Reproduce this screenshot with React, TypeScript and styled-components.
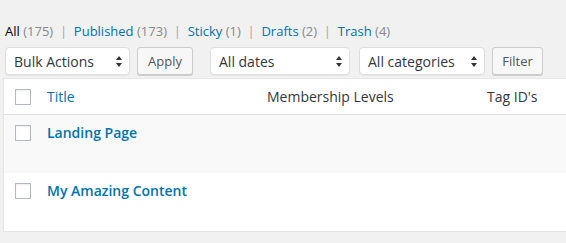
import React from "react";
import styled, { createGlobalStyle } from "styled-components";

const Global = createGlobalStyle`
  html, body { margin: 0; padding: 0; background: #f1f1f1; overflow: hidden; }
  body { font-family: "Open Sans", "Liberation Sans", sans-serif; color: #444; font-size: 13px; }
`;

const Page = styled.div`
  padding: 18px 0 0 3px;
  width: 640px;
`;

const Views = styled.ul`
  list-style: none;
  margin: 0 0 3px 2px;
  padding: 0;
  display: flex;
  height: 26px;
  line-height: 26px;
  font-size: 13px;
  color: #666;
  white-space: pre;
`;

const ViewItem = styled.li``;

const ViewLink = styled.a<{ $current?: boolean }>`
  color: ${(p) => (p.$current ? "#000" : "#0073aa")};
  text-decoration: none;
`;

const Count = styled.span`
  color: #888;
`;

const Sep = styled.span`
  color: #a0a5aa;
`;

const Nav = styled.div`
  display: flex;
  align-items: center;
  margin-left: 2px;
  height: 28px;
  margin-bottom: 3px;
`;

const Group = styled.div`
  display: flex;
  gap: 7px;
  margin-right: 17px;
  &:last-child { margin-right: 0; }
`;

const Select = styled.div<{ $w: number; $pad?: number; $ml?: number }>`
  position: relative;
  box-sizing: border-box;
  width: ${(p) => p.$w}px;
  height: 28px;
  margin-left: ${(p) => p.$ml ?? 0}px;
  background: #fff;
  border: 1px solid #ddd;
  border-radius: 4px;
  box-shadow: 0 1px 1px rgba(0, 0, 0, 0.04);
  display: flex;
  align-items: center;
  padding-left: ${(p) => p.$pad ?? 8}px;
  font-size: 14px;
  color: #32373c;
`;

const Arrows = styled.svg`
  position: absolute;
  right: 7px;
  top: 8px;
`;

const Button = styled.div<{ $w: number }>`
  box-sizing: border-box;
  width: ${(p) => p.$w}px;
  height: 28px;
  background: #f7f7f7;
  border: 1px solid #ccc;
  border-radius: 3px;
  box-shadow: 0 1px 0 #ccc;
  display: flex;
  align-items: center;
  justify-content: center;
  font-size: 13px;
  color: #555;
`;

const Table = styled.div`
  width: 620px;
  background: #fff;
  border: 1px solid #e5e5e5;
  box-shadow: 0 1px 1px rgba(0, 0, 0, 0.04);
`;

const Row = styled.div<{ $head?: boolean; $alt?: boolean }>`
  display: grid;
  grid-template-columns: 43px 220px 220px 1fr;
  height: ${(p) => (p.$head ? "35px" : "58px")};
  background: ${(p) => (p.$alt ? "#f9f9f9" : "#fff")};
  border-bottom: ${(p) => (p.$head ? "1px solid #e1e1e1" : "none")};
`;

const CheckCell = styled.div`
  padding: 10px 0 0 11px;
`;

const Check = styled.div`
  box-sizing: border-box;
  width: 16px;
  height: 16px;
  border: 1px solid #b4b9be;
  background: #fff;
  box-shadow: inset 0 1px 2px rgba(0, 0, 0, 0.07);
`;

const HeadCell = styled.div<{ $link?: boolean }>`
  font-size: 14px;
  line-height: 20px;
  padding-top: 8px;
  color: ${(p) => (p.$link ? "#0073aa" : "#32373c")};
`;

const TitleCell = styled.div`
  font-size: 14px;
  font-weight: 600;
  line-height: 20px;
  padding-top: 8px;
  color: #0073aa;
`;

const Cell = styled.div``;

const SelectArrows = () => (
  <Arrows width="6" height="11" viewBox="0 0 6 11">
    <path d="M3 0 L6 4 L0 4 Z" fill="#333" />
    <path d="M0 7 L6 7 L3 11 Z" fill="#333" />
  </Arrows>
);

const views = [
  { label: "All", count: 175, current: true },
  { label: "Published", count: 173 },
  { label: "Sticky", count: 1 },
  { label: "Drafts", count: 2 },
  { label: "Trash", count: 4 },
];

const rows = ["Landing Page", "My Amazing Content"];

export default function App() {
  return (
    <>
      <Global />
      <Page>
        <Views>
          {views.map((v, i) => (
            <ViewItem key={v.label}>
              <ViewLink $current={v.current}>
                {v.label} <Count>({v.count})</Count>
              </ViewLink>
              {i < views.length - 1 && <Sep>{"  |  "}</Sep>}
            </ViewItem>
          ))}
        </Views>
        <Nav>
          <Group>
            <Select $w={125}>
              Bulk Actions
              <SelectArrows />
            </Select>
            <Button $w={56}>Apply</Button>
          </Group>
          <Group>
            <Select $w={140}>
              All dates
              <SelectArrows />
            </Select>
            <Select $w={126} $ml={2}>
              All categories
              <SelectArrows />
            </Select>
            <Button $w={51}>Filter</Button>
          </Group>
        </Nav>
        <Table>
          <Row $head>
            <CheckCell>
              <Check />
            </CheckCell>
            <HeadCell $link>Title</HeadCell>
            <HeadCell>Membership Levels</HeadCell>
            <HeadCell>Tag ID's</HeadCell>
          </Row>
          {rows.map((r, i) => (
            <Row key={r} $alt={i % 2 === 0}>
              <CheckCell>
                <Check />
              </CheckCell>
              <TitleCell>{r}</TitleCell>
              <Cell />
              <Cell />
            </Row>
          ))}
        </Table>
      </Page>
    </>
  );
}
